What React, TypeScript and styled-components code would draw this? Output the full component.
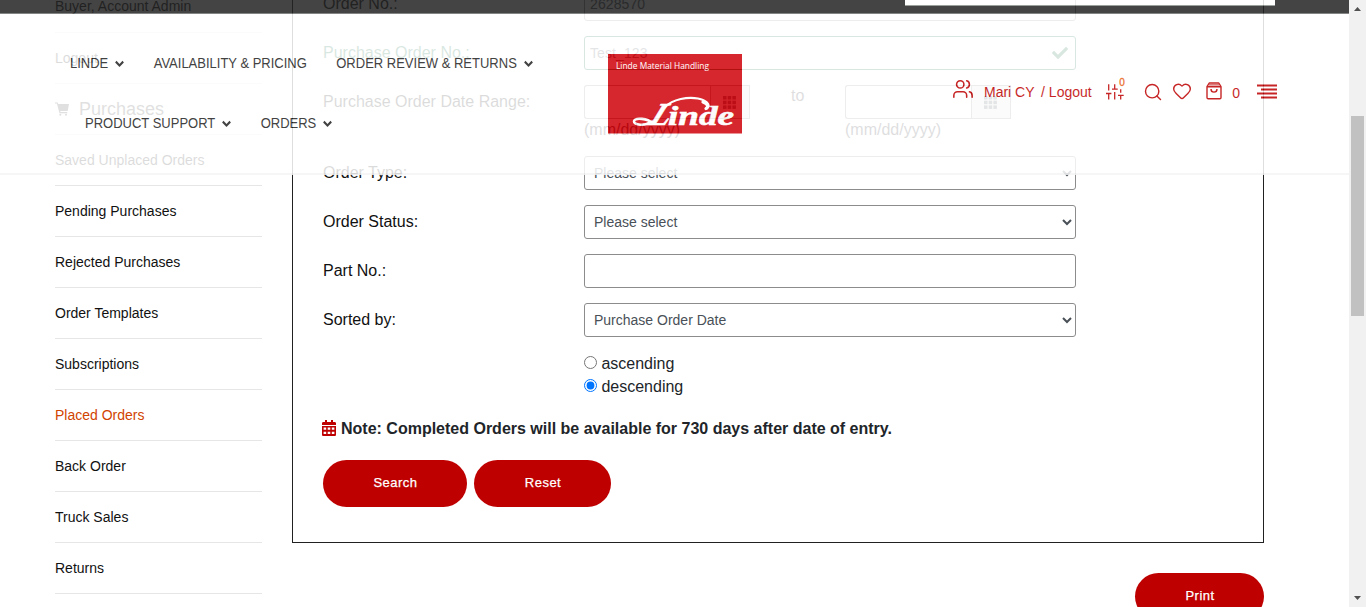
import React from 'react';
import styled, { createGlobalStyle } from 'styled-components';
import { Heart, Search as SearchIcon, Users } from 'lucide-react';
import { FaCheck } from 'react-icons/fa';

const Global = createGlobalStyle`
  * { box-sizing: border-box; }
  html, body { margin: 0; height: 607px; overflow: hidden; background: #fff; }
  body { font-family: "Liberation Sans", Arial, sans-serif; font-size: 16px; color: #212529; }
`;

const Frame = styled.div`
  display: flex;
  width: 1366px;
  height: 607px;
  overflow: hidden;
`;

const Viewport = styled.div`
  position: relative;
  width: 1349px;
  height: 607px;
  overflow: hidden;
`;

const Content = styled.div`
  display: flex;
  align-items: flex-start;
  gap: 30px;
  margin-top: -19px;
  padding-left: 55px;
`;

const Sidebar = styled.nav`
  display: flex;
  flex-direction: column;
  width: 207px;
`;

const SideItem = styled.a<{ $active?: boolean }>`
  display: flex;
  align-items: center;
  height: 51px;
  border-bottom: 1px solid #e6e6e6;
  font-size: 14px;
  color: ${(p) => (p.$active ? '#d14300' : '#111')};
  white-space: nowrap;
  &:first-child { height: 52px; padding-bottom: 2px; }
`;

const SideHeading = styled(SideItem)`
  gap: 9px;
  padding-top: 1px;
  font-size: 18px;
  color: #333;
`;

const Main = styled.div`
  display: flex;
  flex-direction: column;
  align-items: flex-end;
  width: 972px;
`;

const Panel = styled.form`
  display: flex;
  flex-direction: column;
  width: 972px;
  height: 562px;
  padding: 6px 30px 0;
  border: 1px solid #212121;
  border-top: 0;
`;

const Row = styled.div<{ $h?: number }>`
  display: grid;
  grid-template-columns: 261px 492px;
  height: ${(p) => p.$h ?? 49}px;
  flex: none;
`;

const Label = styled.label<{ $valid?: boolean }>`
  padding-top: 5px;
  line-height: 24px;
  color: ${(p) => (p.$valid ? '#006238' : '#111')};
`;

const Input = styled.input<{ $valid?: boolean }>`
  width: 100%;
  height: 34px;
  padding: 0 5px;
  border: 1px solid ${(p) => (p.$valid ? '#006238' : '#8c8c8c')};
  border-radius: 3px;
  background: #fff;
  font: 14px "Liberation Sans", Arial, sans-serif;
  letter-spacing: 0.1px;
  color: #495057;
`;

const Select = styled.select`
  width: 100%;
  height: 34px;
  padding: 0 6px 0 5px;
  border: 1px solid #8c8c8c;
  border-radius: 3px;
  background: #fff;
  font: 14px "Liberation Sans", Arial, sans-serif;
  color: #495057;
`;

const Checked = styled.div`
  position: relative;
  height: 34px;
  svg { position: absolute; right: 8px; top: 9px; color: #006238; }
`;

const DateRow = styled.div`
  display: grid;
  grid-template-columns: 207px 54px 166px;
  height: 71px;
`;

const DateGroup = styled.div`
  display: grid;
  grid-template-columns: 126px 40px;
  grid-template-rows: 34px 22px;
  width: 166px;
  color: #212529;
  ${Input} { border-radius: 3px 0 0 3px; border-right: 0; }
`;

const DateButton = styled.span`
  display: flex;
  align-items: center;
  justify-content: center;
  border: 1px solid #8c8c8c;
  background: #e9e9e9;
  padding-right: 2px;
`;

const DateHint = styled.span`
  grid-column: 1 / 3;
  line-height: 22px;
`;

const To = styled.span`
  line-height: 22px;
`;

const Radios = styled.div`
  display: flex;
  flex-direction: column;
`;

const Radio = styled.label`
  display: flex;
  gap: 4.4px;
  height: 23px;
  line-height: 23px;
  input { width: 13px; height: 13px; margin: 4px 0 0; accent-color: #0075ff; }
`;

const Note = styled.div`
  display: flex;
  align-items: center;
  gap: 5px;
  height: 24px;
  margin: 13px 0 0 -1px;
  font-weight: 700;
  svg { color: #be0000; margin-bottom: 2px; }
`;

const Buttons = styled.div`
  display: flex;
  gap: 7px;
  margin-top: 19px;
`;

const Pill = styled.button<{ $w: number }>`
  width: ${(p) => p.$w}px;
  height: 47px;
  padding: 0 0 3px 1px;
  border: 0;
  border-radius: 24px;
  background: #be0000;
  color: #fff;
  font: 13px "Liberation Sans", Arial, sans-serif;
  letter-spacing: 0.5px;
  -webkit-text-stroke: 0.25px #fff;
`;

const PrintBar = styled.div`
  display: flex;
  margin-top: 30px;
`;

const Header = styled.header`
  position: absolute;
  top: 0;
  left: 0;
  width: 1349px;
  height: 175px;
  background: #fff;
  border-bottom: 2px solid #f5f5f5;
  opacity: 0.85;
`;

const TopBar = styled.div`
  display: flex;
  justify-content: flex-end;
  align-items: flex-start;
  height: 14px;
  padding-right: 74px;
  background: #242424;
  border-bottom: 1px solid #6e706f;
`;

const TopSearch = styled.div`
  width: 370px;
  height: 6px;
  background: #fff;
  border-bottom: 1px solid #8b908d;
`;

const HeaderBody = styled.div`
  display: grid;
  grid-template-columns: 608px 345px 1fr;
  align-items: start;
  height: 159px;
`;

const Nav = styled.nav`
  display: flex;
  flex-direction: column;
  padding-top: 36.5px;
`;

const NavRow = styled.div<{ $x: number }>`
  display: flex;
  gap: 29.4px;
  height: 60px;
  padding-left: ${(p) => p.$x}px;
`;

const NavLink = styled.a`
  display: flex;
  align-items: center;
  gap: 7px;
  height: 24px;
  font: 13px "Liberation Sans", Arial, sans-serif;
  color: #222;
  white-space: nowrap;
  transform: scaleY(1.07);
`;

const Logo = styled.svg`
  display: block;
  margin-top: 40px;
`;

const Tools = styled.div`
  display: flex;
  align-items: flex-start;
  height: 30px;
  margin-top: 62px;
  color: #be0000;
  font: 14px "Liberation Sans", Arial, sans-serif;
  white-space: nowrap;
  svg { flex: none; }
`;

const Tool = styled.span<{ $l?: number; $t?: number }>`
  display: flex;
  margin-left: ${(p) => p.$l ?? 0}px;
  padding-top: ${(p) => p.$t ?? 0}px;
  line-height: 16px;
`;

const Badge = styled.sup`
  width: 6px;
  margin-left: -5px;
  padding-top: 1px;
  font-size: 10px;
  line-height: 12px;
  color: #e8590c;
  -webkit-text-stroke: 0.3px #e8590c;
`;

const ScrollTrack = styled.div`
  display: flex;
  flex-direction: column;
  align-items: center;
  width: 17px;
  height: 607px;
  padding: 7px 0;
  background: #f1f1f1;
`;

const Thumb = styled.div`
  flex: none;
  width: 13px;
  height: 200px;
  margin: 105px 1px auto 0;
  background: #c1c1c1;
`;

const Chevron = () => (
  <svg width="9" height="7" viewBox="0 0 9 7" fill="none" stroke="#222" strokeWidth="2">
    <path d="M0.8 1.7 4.5 5.3 8.2 1.7" />
  </svg>
);

const Cart = () => (
  <svg width="15" height="15" viewBox="0 0 15 15" fill="#333">
    <path d="M0 0.5h2.6l.6 1.5H14l-1.3 7H5.2l.3 1h6.7v1.3H4.5L1.9 1.5H0z" />
    <circle cx="5.3" cy="12.8" r="1" />
    <circle cx="11" cy="12.8" r="1" />
  </svg>
);

const Calendar = () => (
  <svg width="14" height="16" viewBox="0 0 14 16" fill="currentColor">
    <path d="M3 0h2v2h4V0h2v2h1.7C13.4 2 14 2.6 14 3.3V5H0V3.3C0 2.6.6 2 1.3 2H3z" />
    <path fillRule="evenodd" d="M0 6h14v8.7c0 .7-.6 1.3-1.3 1.3H1.3C.6 16 0 15.4 0 14.7zM1.600 7.600v2.200h2.600v-2.200zM5.700 7.600v2.200h2.600v-2.200zM9.800 7.600v2.200h2.600v-2.200zM1.600 11.800v2.200h2.600v-2.200zM5.700 11.800v2.200h2.600v-2.200zM9.800 11.800v2.200h2.600v-2.200z" />
  </svg>
);

const GridIcon = () => (
  <svg width="13" height="13" viewBox="0 0 13 13" fill="#495057">
    {[0, 4.7, 9.4].map((y) => [0, 4.7, 9.4].map((x) => <rect key={`${x}-${y}`} x={x} y={y} width="3.5" height="3.5" />))}
  </svg>
);

const Sliders = () => (
  <svg width="18" height="17" viewBox="0 0 18 17" fill="none" stroke="currentColor" strokeWidth="1.3">
    <path d="M2.7 0.3v6.3M0 9.5h5.4M2.7 9.5v6M8.7 0.3v4.7M6 5.2h5.7M8.7 8v7.5M14.7 5.2v3.5M12 11.3H17.7M14.7 11.3v4.2" />
  </svg>
);

const Bag = () => (
  <svg width="16" height="18" viewBox="0 0 16 18" fill="none" stroke="currentColor" strokeWidth="1.4" strokeLinejoin="round">
    <path d="M1 4.5v11c0 .7.5 1.2 1.2 1.2h11.6c.7 0 1.2-.5 1.2-1.2v-11L12.8 1H3.2z" />
    <path d="M1 4.8h14M5 7c0 4.2 6 4.2 6 0" />
    <path strokeWidth="1" d="M2.5 2.9h11" />
  </svg>
);

const Menu = () => (
  <svg width="20" height="15" viewBox="0 0 20 15" fill="none" stroke="currentColor" strokeWidth="2">
    <path d="M0 1.5h20M4 5.5h16M0 9.5h20M4 13.5h16" />
  </svg>
);

const LindeLogo = () => (
  <Logo width="134" height="80" viewBox="0 0 134 80">
    <rect width="134" height="79.5" fill="#d0020a" />
    <text x="8" y="14.5" fill="#fff" fontFamily="Open Sans, sans-serif" fontSize="9" textLength="93" lengthAdjust="spacingAndGlyphs">
      Linde Material Handling
    </text>
    <g fill="none" stroke="#fff" strokeLinecap="round">
      <path strokeWidth="2.2" d="M57 53C65 45 80 42.5 90 44.5c8 1.5 13 6 9 10" />
      <path strokeWidth="3.2" d="M95 48c5 2 6 4.500 3 6.500" />
      <path strokeWidth="2.6" d="M44 69c-4-4.500-17-6-18-1.800-.6 4.300 11 4.800 18 .5" />
    </g>
    <g fill="#fff" stroke="#fff" strokeWidth="0.6" fontFamily="Liberation Serif, serif" fontWeight="700" fontStyle="italic">
      <text transform="translate(40 71) skewX(-24)" fontSize="32">L</text>
      <text x="60" y="71" fontSize="28" textLength="66" lengthAdjust="spacingAndGlyphs">inde</text>
    </g>
  </Logo>
);

const pages = ['Pending Purchases', 'Rejected Purchases', 'Order Templates', 'Subscriptions', 'Placed Orders', 'Back Order', 'Truck Sales', 'Returns'];

const DateField = () => (
  <DateGroup>
    <Input />
    <DateButton><GridIcon /></DateButton>
    <DateHint>(mm/dd/yyyy)</DateHint>
  </DateGroup>
);

export default function App() {
  return (
    <Frame>
      <Global />
      <Viewport>
        <Content>
          <Sidebar>
            <SideItem>Buyer, Account Admin</SideItem>
            <SideItem>Logout</SideItem>
            <SideHeading><Cart />Purchases</SideHeading>
            <SideItem>Saved Unplaced Orders</SideItem>
            {pages.map((name) => (
              <SideItem key={name} $active={name === 'Placed Orders'}>{name}</SideItem>
            ))}
          </Sidebar>
          <Main>
            <Panel>
              <Row>
                <Label>Order No.:</Label>
                <Input defaultValue="2628570" />
              </Row>
              <Row>
                <Label $valid>Purchase Order No.:</Label>
                <Checked>
                  <Input $valid defaultValue="Test_123" />
                  <FaCheck size={16} />
                </Checked>
              </Row>
              <Row $h={71}>
                <Label>Purchase Order Date Range:</Label>
                <DateRow>
                  <DateField />
                  <To>to</To>
                  <DateField />
                </DateRow>
              </Row>
              <Row>
                <Label>Order Type:</Label>
                <Select><option>Please select</option></Select>
              </Row>
              <Row>
                <Label>Order Status:</Label>
                <Select><option>Please select</option></Select>
              </Row>
              <Row>
                <Label>Part No.:</Label>
                <Input />
              </Row>
              <Row>
                <Label>Sorted by:</Label>
                <Select><option>Purchase Order Date</option></Select>
              </Row>
              <Row $h={52}>
                <span />
                <Radios>
                  <Radio><input type="radio" name="sort" />ascending</Radio>
                  <Radio><input type="radio" name="sort" defaultChecked />descending</Radio>
                </Radios>
              </Row>
              <Note><Calendar />Note: Completed Orders will be available for 730 days after date of entry.</Note>
              <Buttons>
                <Pill type="button" $w={144}>Search</Pill>
                <Pill type="button" $w={137}>Reset</Pill>
              </Buttons>
            </Panel>
            <PrintBar><Pill type="button" $w={129}>Print</Pill></PrintBar>
          </Main>
        </Content>
        <Header>
          <TopBar><TopSearch /></TopBar>
          <HeaderBody>
            <Nav>
              <NavRow $x={70}>
                <NavLink>LINDE <Chevron /></NavLink>
                <NavLink>AVAILABILITY &amp; PRICING</NavLink>
                <NavLink>ORDER REVIEW &amp; RETURNS <Chevron /></NavLink>
              </NavRow>
              <NavRow $x={85}>
                <NavLink>PRODUCT SUPPORT <Chevron /></NavLink>
                <NavLink>ORDERS <Chevron /></NavLink>
              </NavRow>
            </Nav>
            <LindeLogo />
            <Tools>
              <Tool $l={-1} $t={2}><Users size={22} strokeWidth={1.7} /></Tool>
              <Tool $l={10} $t={8}>Mari CY</Tool>
              <Tool $l={6.5} $t={8}>/ Logout</Tool>
              <Tool $l={14.5} $t={8}><Sliders /></Tool>
              <Badge>0</Badge>
              <Tool $l={18} $t={5.5}><SearchIcon size={20} strokeWidth={1.7} /></Tool>
              <Tool $l={8.4} $t={4.7}><Heart size={20} strokeWidth={1.7} /></Tool>
              <Tool $l={14.6} $t={6}><Bag /></Tool>
              <Tool $l={10} $t={9}>0</Tool>
              <Tool $l={17.5} $t={8}><Menu /></Tool>
            </Tools>
          </HeaderBody>
        </Header>
      </Viewport>
      <ScrollTrack>
        <svg width="7" height="4" viewBox="0 0 7 4"><path d="M0 4 3.5 0 7 4z" fill="#505050" /></svg>
        <Thumb />
        <svg width="7" height="4" viewBox="0 0 7 4"><path d="M0 0 3.5 4 7 0z" fill="#505050" /></svg>
      </ScrollTrack>
    </Frame>
  );
}
